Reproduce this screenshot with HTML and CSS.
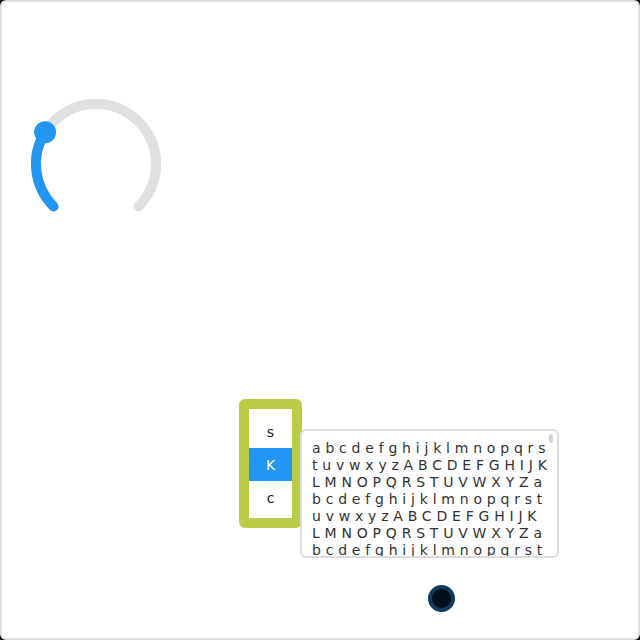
FILE: index.html
```html
<!DOCTYPE html>
<html>
<head>
<meta charset="utf-8">
<link rel="stylesheet" href="styles.css">
</head>
<body>
<div class="frame">
  <svg class="knob" viewBox="0 0 150 150" width="150" height="150">
    <path class="track" d="M 32.57 117.43 A 60 60 0 1 1 117.43 117.43"/>
    <path class="value" d="M 32.57 117.43 A 60 60 0 0 1 24.12 43.2"/>
    <circle class="handle" cx="24.12" cy="43.2" r="11"/>
  </svg>
  <div class="row">
    <div class="picker">
      <div class="item">s</div>
      <div class="item selected">K</div>
      <div class="item">c</div>
    </div>
    <div class="scroll-box">
      <div class="scroller">abcdefghijklmnopqrstuvwxyzABCDEFGHIJKLMNOPQRSTUVWXYZabcdefghijklmnopqrstuvwxyzABCDEFGHIJKLMNOPQRSTUVWXYZabcdefghijklmnopqrstuvwxyzABCDEFGHIJKLMNOPQRSTUVWXYZabcdefghijklmnopqrstuvwxyzABCDEFGHIJKLMNOPQRSTUVWXYZabcdefghijklmnopqrstuvwxyzABCDEFGHIJKLMNOPQRSTUVWXYZabcdefghijklmnopqrstuvwxyzABCDEFGHIJKLMNOPQRSTUVWXYZabcdefghijklmnopqrstuvwxyzABCDEFGHIJKLMNOPQRSTUVWXYZabcdefghijklmnopqrstuvwxyzABCDEFGHIJKLMNOPQRSTUVWXYZ</div>
      <div class="thumb"></div>
    </div>
  </div>
  <div class="dot"></div>
</div>
</body>
</html>
```
FILE: styles.css
```css
html, body {
  margin: 0;
  padding: 0;
  background: #000;
}

.frame {
  width: 640px;
  height: 640px;
  box-sizing: border-box;
  border: 2px solid #dcdcdc;
  border-radius: 6px;
  background: #fff;
  overflow: hidden;
  font-family: "DejaVu Sans", sans-serif;
}

.knob {
  display: block;
  margin: 87px 0 0 19px;
}

.knob path {
  fill: none;
  stroke-width: 10;
  stroke-linecap: round;
}

.knob .track {
  stroke: #e0e0e0;
}

.knob .value {
  stroke: #2196f3;
}

.knob .handle {
  fill: #2196f3;
}

.row {
  display: flex;
  align-items: flex-start;
  margin-top: 160px;
  padding-left: 237px;
}

.picker {
  width: 43px;
  height: 103px;
  padding-top: 6px;
  border: 10px solid #bacb45;
  border-radius: 6px;
  background: #fff;
}

.item {
  height: 33px;
  display: flex;
  align-items: center;
  justify-content: center;
  font-size: 14px;
  color: #222;
}

.item.selected {
  background: #2196f3;
  color: #fff;
}

.scroll-box {
  position: relative;
  box-sizing: border-box;
  width: 259px;
  height: 129px;
  margin-top: 30px;
  margin-left: -2px;
  border: 2px solid #dcdcdc;
  border-radius: 6px;
  background: #fff;
  overflow: hidden;
}

.scroller {
  box-sizing: border-box;
  height: 100%;
  padding: 9px 3.5px 0 10px;
  overflow: hidden;
  word-break: break-all;
  font-size: 14px;
  line-height: 17px;
  letter-spacing: 4.8px;
  color: #333;
}

.thumb {
  position: absolute;
  top: 3px;
  right: 4px;
  width: 4px;
  height: 9px;
  border-radius: 2px;
  background: #d4d4d4;
}

.dot {
  box-sizing: border-box;
  width: 27px;
  height: 27px;
  margin: 27px 0 0 426px;
  border-radius: 50%;
  border: 4px solid #0f3a5c;
  background: #02101b;
}
```
